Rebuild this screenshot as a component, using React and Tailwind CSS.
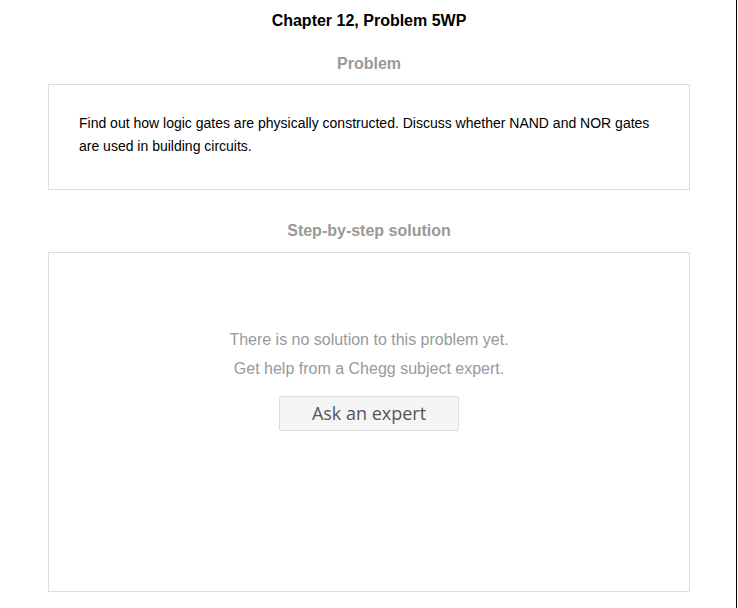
/* Chegg textbook solution — empty state */

const sans = { fontFamily: '"Liberation Sans", Arial, sans-serif' };

function SectionTitle({ children }) {
  return (
    <h2 className="text-center text-[16px] leading-[20px] font-bold text-[#999]">
      {children}
    </h2>
  );
}

export default function App() {
  return (
    <div className="min-h-[608px] w-[737px] border-r border-black bg-white" style={sans}>
      <div className="ml-[48px] w-[642px] pt-[11px] pb-4">
        <h1 className="text-center text-[16px] leading-[20px] font-bold text-black">
          Chapter 12, Problem 5WP
        </h1>

        <div className="mt-[23px]">
          <SectionTitle>Problem</SectionTitle>
        </div>
        <div className="mt-[10px] border border-[#ddd] pl-[30px] pr-[30px] pt-[27px] pb-[31px]">
          <p className="text-[14px] leading-[23px] text-black">
            Find out how logic gates are physically constructed. Discuss whether NAND and NOR gates
            are used in building circuits.
          </p>
        </div>

        <div className="mt-[31px]">
          <SectionTitle>Step-by-step solution</SectionTitle>
        </div>
        <div className="mt-[11px] flex h-[340px] flex-col items-center border border-[#ddd] pt-[72px]">
          <p className="text-center text-[16px] leading-[29px] text-[#999]">
            There is no solution to this problem yet.
            <br />
            Get help from a Chegg subject expert.
          </p>
          <button
            className="mt-[13px] h-[35px] w-[180px] rounded-[2px] border border-[#ddd] bg-[#f5f5f5] text-[18px] text-[#555]"
            style={{ fontFamily: '"Open Sans", "DejaVu Sans", sans-serif' }}
          >
            Ask an expert
          </button>
        </div>
      </div>
    </div>
  );
}
